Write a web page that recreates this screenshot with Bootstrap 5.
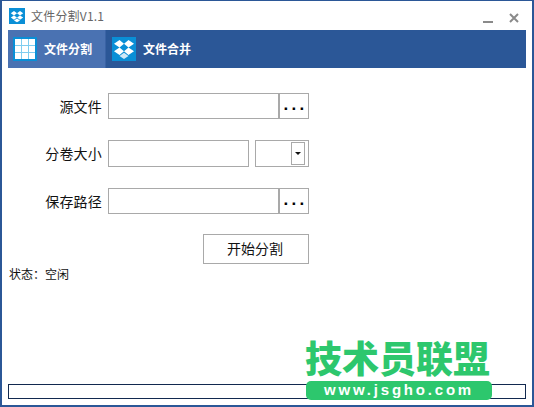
<!DOCTYPE html>
<html lang="zh-CN">

<head>
  <meta charset="UTF-8">
  <title>文件分割V1.1</title>
  <meta name="viewport" content="width=device-width, initial-scale=1">
  <link href="https://cdn.jsdelivr.net/npm/bootstrap@5.3.0/dist/css/bootstrap.min.css" rel="stylesheet">
  <style>
    html, body { height: 100%; overflow: hidden; }
    body { font-family: "Noto Sans CJK SC", sans-serif; font-size: 14px; color: #111; background: #fff; }
    .app-window { position: relative; width: 534px; height: 407px; border: 1px solid #2b5797; border-width: 1px 2px 2px 2px; }
    .title-row { height: 29px; padding: 0 0 0 7px; color: #666; font-size: 12px; }
    .title-text { margin-left: 6px; padding-top: 1px; letter-spacing: .2px; }
    .win-btns { margin-right: 13px; margin-top: 4px; gap: 16px; }
    .tab-strip { height: 38px; margin: 0 6px; background: #2b5797; color: #fff; font-weight: 700; font-size: 12px; }
    .tab-item { height: 38px; padding-left: 5px; gap: 7px; }
    .tab-on { width: 98px; background: #4a72b2; border-right: 1px solid #3a63a5; }
    .tab-off { padding-left: 6px; }
    .tab-icon { width: 24px; height: 24px; background: #0a8fd6; flex: none; }
    .form-area { padding: 25px 0 0 6px; }
    .field-row { height: 26px; margin-bottom: 21px; }
    .field-tall { height: 27px; }
    .field-label { width: 100px; text-align: right; padding-right: 6px; letter-spacing: .2px; }
    .plain-box { height: 100%; border: 1px solid #a9a9a9; background: #fff; border-radius: 0; padding: 0 4px; outline: none; }
    .box-wide { width: 171px; }
    .box-short { width: 141px; }
    .browse-btn { width: 31px; height: 100%; margin-left: -1px; border: 1px solid #a9a9a9; border-left-width: 2px; background: #fff; padding: 0 0 3px; font-weight: 700; letter-spacing: 3.3px; text-indent: 3px; color: #000; font-family: "Liberation Sans", sans-serif; font-size: 17px; line-height: 1; }
    .combo-box { width: 54px; margin-left: 6px; height: 27px; border: 1px solid #a9a9a9; padding: 1px 3px 1px 1px; }
    .combo-arrow { width: 14px; height: 23px; border: 1px solid #a9a9a9; }
    .combo-arrow::after { content: ""; border: 3px solid transparent; border-top: 3px solid #111; border-bottom: 0; }
    .start-btn { width: 106px; height: 30px; margin-left: 195px; margin-top: -1px; border: 1px solid #a9a9a9; background: #fff; padding: 0 2px 2px 0; color: #111; }
    .status-line { position: absolute; left: 7px; top: 264px; font-size: 12px; }
    .progress-box { position: absolute; left: 6px; right: 6px; top: 383px; height: 15px; border: 1px solid #12294f; }
    .mark-layer { position: absolute; left: 304px; top: 337px; width: 186px; color: #2dc76d; }
    .mark-title { margin-left: -1px; font-weight: 900; font-size: 37px; line-height: 39px; white-space: nowrap; }
    .mark-pill { height: 19px; margin-top: 4px; background: #2dc76d; color: #fff; border-radius: 5px; font-family: "Liberation Sans", sans-serif; font-weight: 700; font-size: 15px; letter-spacing: 2.8px; line-height: 18px; text-align: center; }
  </style>
</head>

<body class="m-0">
  <div class="app-window">
    <div class="title-row d-flex align-items-center justify-content-between">
      <div class="d-flex align-items-center">
        <svg width="16" height="16" viewBox="0 0 16 16">
          <rect width="16" height="16" fill="#0a8fd6"/>
          <path d="M5 3 1.8 5.2 5 7.4 8 5.2ZM11 3 8 5.2 11 7.4 14.2 5.2ZM5 7.4 1.8 9.6 5 11.8 8 9.6ZM11 7.4 8 9.6 11 11.8 14.2 9.6ZM5 12.4 8 10.4 11 12.4 8 14.2Z" fill="#fff"/>
        </svg>
        <span class="title-text">文件分割V1.1</span>
      </div>
      <div class="win-btns d-flex align-items-center">
        <svg width="10" height="10" viewBox="0 0 10 10"><rect x="0" y="8" width="10" height="2" fill="#8a8a8a"/></svg>
        <svg width="10" height="10" viewBox="0 0 10 10"><path d="M1 1 9 9M9 1 1 9" stroke="#8a8a8a" stroke-width="2" fill="none"/></svg>
      </div>
    </div>

    <nav class="tab-strip d-flex">
      <div class="tab-item tab-on d-flex align-items-center">
        <svg class="tab-icon" viewBox="0 0 24 24">
          <rect x="2" y="2" width="20" height="20" fill="#fff"/>
          <path d="M8.5 2v20M15.5 2v20M2 8.5h20M2 15.5h20" stroke="#7fcdf0" stroke-width="1"/>
        </svg>
        <span>文件分割</span>
      </div>
      <div class="tab-item tab-off d-flex align-items-center">
        <svg class="tab-icon" viewBox="0 0 24 24">
          <path d="M7.5 3 2 6.8 7.5 10.5 12 6.8ZM16.5 3 12 6.8 16.5 10.5 22 6.8ZM7.5 10.5 2 14.2 7.5 18 12 14.2ZM16.5 10.5 12 14.2 16.5 18 22 14.2Z" fill="#fff"/>
          <path d="M7.5 19 12 15.8 16.5 19 12 22Z" fill="#cfe9f7"/>
        </svg>
        <span>文件合并</span>
      </div>
    </nav>

    <div class="form-area">
      <div class="field-row d-flex align-items-center">
        <label class="field-label">源文件</label>
        <input class="plain-box box-wide" type="text">
        <button class="browse-btn" type="button">...</button>
      </div>
      <div class="field-row field-tall d-flex align-items-center">
        <label class="field-label">分卷大小</label>
        <input class="plain-box box-short" type="text">
        <div class="combo-box d-flex justify-content-end">
          <div class="combo-arrow d-flex align-items-center justify-content-center"></div>
        </div>
      </div>
      <div class="field-row d-flex align-items-center">
        <label class="field-label">保存路径</label>
        <input class="plain-box box-wide" type="text">
        <button class="browse-btn" type="button">...</button>
      </div>
      <button class="start-btn d-block" type="button">开始分割</button>
    </div>

    <div class="status-line">状态：空闲</div>
    <div class="progress-box"></div>

    <div class="mark-layer">
      <div class="mark-title">技术员联盟</div>
      <div class="mark-pill">www.jsgho.com</div>
    </div>
  </div>
</body>
</html>
